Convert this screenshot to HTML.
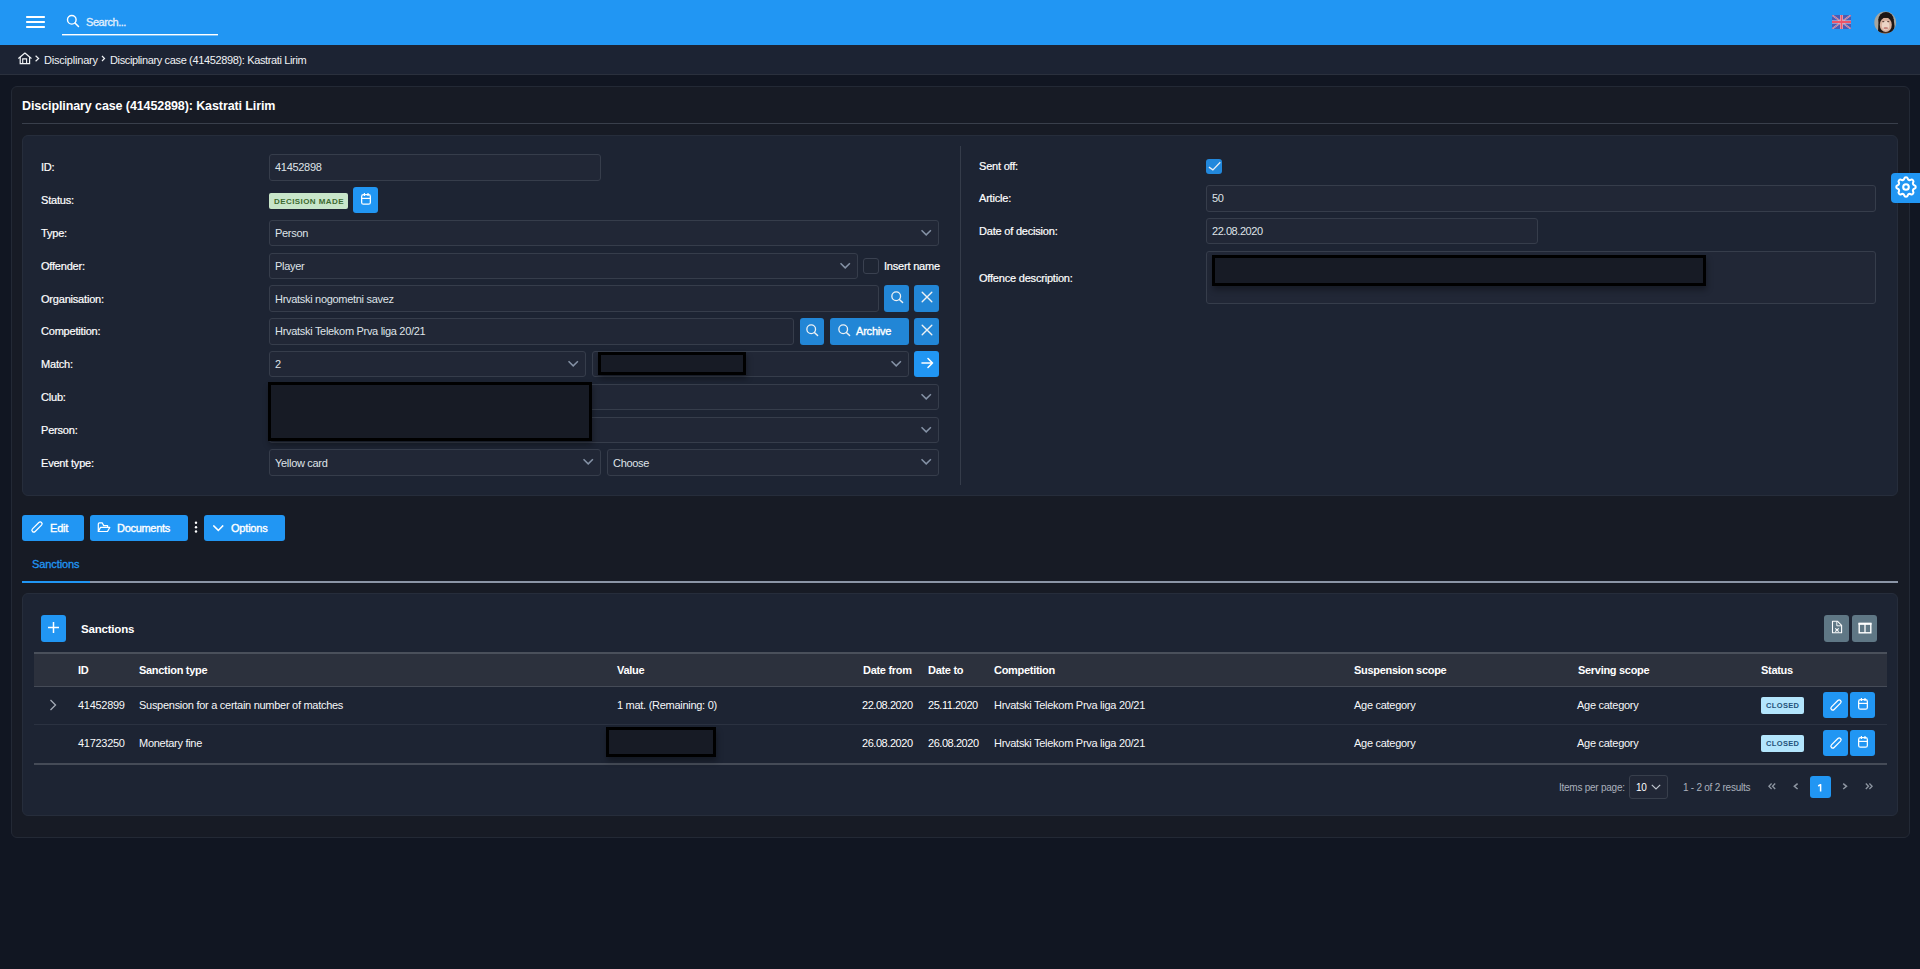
<!DOCTYPE html>
<html><head><meta charset="utf-8">
<style>
*{box-sizing:border-box;margin:0;padding:0}
html,body{width:1920px;height:969px;overflow:hidden}
body{background:#111622;font-family:"Liberation Sans",sans-serif;color:#e9ecef;font-size:11px;position:relative}
.a{position:absolute}
.t{position:absolute;white-space:nowrap;line-height:14px;letter-spacing:-0.2px}
.topbar{left:0;top:0;width:1920px;height:45px;background:#2196f3}
.crumb{left:0;top:45px;width:1920px;height:30px;background:#1c2333;border-bottom:1px solid #2a303d}
.outer{left:11px;top:86px;width:1899px;height:752px;background:#171b25;border:1px solid #232935;border-radius:6px}
.card{background:#1d2433;border:1px solid #262d3b;border-radius:6px}
.inp{position:absolute;background:#212736;border:1px solid #363d4b;border-radius:3px}
.btn{position:absolute;background:#2196f3;border-radius:3px}
.btn2{position:absolute;background:#2286d6;border-radius:3px}
.lbl{position:absolute;white-space:nowrap;line-height:14px;color:#fff;letter-spacing:-0.2px;-webkit-text-stroke:0.2px #fff}
.val{position:absolute;white-space:nowrap;line-height:14px;color:#dfe3e8;letter-spacing:-0.2px}
.chev{position:absolute;width:11px;height:8px}
.red{position:absolute;border:3px solid #000;background:#171b25;box-shadow:1px 4px 6px rgba(0,0,0,.32)}
</style></head><body>

<!-- top bar -->
<div class="a topbar"></div>
<svg class="a" style="left:26px;top:15px" width="20" height="14" viewBox="0 0 20 14"><rect x="0" y="1" width="19" height="2" rx="0.8" fill="#fff"/><rect x="0" y="6" width="19" height="2" rx="0.8" fill="#fff"/><rect x="0" y="11" width="19" height="2" rx="0.8" fill="#fff"/></svg>
<svg class="a" style="left:66px;top:14px" width="14" height="14" viewBox="0 0 14 14"><circle cx="5.8" cy="5.8" r="4.3" fill="none" stroke="#fff" stroke-width="1.4"/><line x1="9" y1="9" x2="12.5" y2="12.5" stroke="#fff" stroke-width="1.5" stroke-linecap="round"/></svg>
<div class="t" style="left:86px;top:15px;color:#e3f0fd;font-size:11px;letter-spacing:-0.45px;-webkit-text-stroke:0.3px #e3f0fd">Search...</div>
<div class="a" style="left:62px;top:34px;width:156px;height:1px;background:#fff"></div><div class="a" style="left:62px;top:35px;width:156px;height:1px;background:rgba(255,255,255,.4)"></div>


<div class="a" style="left:1832px;top:15px;width:19px;height:14px;overflow:hidden">
<svg width="19" height="14" viewBox="0 0 60 42" preserveAspectRatio="none"><rect width="60" height="42" fill="#4a5bb3"/><path d="M0,0 L60,42 M60,0 L0,42" stroke="#b9bde0" stroke-width="5"/><path d="M0,0 L60,42 M60,0 L0,42" stroke="#e0556a" stroke-width="2.5"/><path d="M30,0 V42 M0,21 H60" stroke="#d8d6e6" stroke-width="9"/><path d="M30,0 V42 M0,21 H60" stroke="#ee5366" stroke-width="6"/></svg></div>
<svg class="a" style="left:1874px;top:11px" width="23" height="23" viewBox="0 0 23 23"><defs><clipPath id="cc"><circle cx="11.2" cy="11.5" r="10.9"/></clipPath><filter id="bl"><feGaussianBlur stdDeviation="0.5"/></filter></defs><g clip-path="url(#cc)"><rect width="23" height="23" fill="#a5a6a0"/><g filter="url(#bl)"><ellipse cx="12" cy="8.5" rx="7.6" ry="7.6" fill="#1d1714"/><path d="M4.6,8 L4,21 Q6,23 8,23 L17,23 Q20.5,20 20.5,15 L19.6,8Z" fill="#1f1915"/><ellipse cx="11.8" cy="13.8" rx="6" ry="7.2" fill="#d8b09d"/><ellipse cx="11.6" cy="14.5" rx="3.8" ry="4.8" fill="#ecd3c5"/><path d="M5,10 Q7,3.5 12,5 Q17,3.5 19,10 Q16.5,6.2 12,6.9 Q7.5,6.2 5,10Z" fill="#1d1714"/><ellipse cx="9.3" cy="10.6" rx="1.2" ry="0.6" fill="#5a4038"/><ellipse cx="14.2" cy="10.6" rx="1.2" ry="0.6" fill="#5a4038"/><ellipse cx="11.8" cy="17.2" rx="2.3" ry="1.1" fill="#c8877e"/><rect x="6" y="21.5" width="12" height="3" fill="#7a4526"/></g></g></svg>

<!-- breadcrumb -->
<div class="a crumb"></div>
<svg class="a" style="left:18px;top:52px" width="14" height="13" viewBox="0 0 14 13"><path d="M0.7,6.2 L6.9,1.1 L13.1,6.2" fill="none" stroke="#f0f2f5" stroke-width="1.25" stroke-linejoin="round" stroke-linecap="round"/><path d="M2.2,5 V11.6 H11.6 V5" fill="none" stroke="#f0f2f5" stroke-width="1.2"/><path d="M4.7,11.6 V6.9 H8.6 V11.6" fill="none" stroke="#f0f2f5" stroke-width="1.1"/></svg>
<svg class="a" style="left:35px;top:55px" width="5" height="7" viewBox="0 0 5 7"><path d="M0.6,0.8 L3.6,3.5 L0.6,6.2" fill="none" stroke="#f0f2f5" stroke-width="1.2"/></svg>
<div class="t" style="left:44px;top:53px;color:#f0f2f5">Disciplinary</div>
<svg class="a" style="left:101px;top:55px" width="5" height="7" viewBox="0 0 5 7"><path d="M1,1 L3.5,3.5 L1,6" fill="none" stroke="#f0f2f5" stroke-width="1.2"/></svg>
<div class="t" style="left:110px;top:53px;color:#f0f2f5;letter-spacing:-0.36px">Disciplinary case (41452898): Kastrati Lirim</div>

<!-- outer card -->
<div class="a outer"></div>
<div class="t" style="left:22px;top:99px;font-weight:bold;font-size:12.5px;color:#fff;letter-spacing:-0.1px">Disciplinary case (41452898): Kastrati Lirim</div>
<div class="a" style="left:22px;top:123px;width:1876px;height:1px;background:#393f4b"></div>

<!-- form card -->
<div class="a card" style="left:22px;top:135px;width:1876px;height:361px"></div>
<div class="a" style="left:960px;top:146px;width:1px;height:339px;background:#353c4a"></div>


<!-- left form -->
<div class="lbl" style="left:41px;top:160px">ID:</div>
<div class="lbl" style="left:41px;top:193px">Status:</div>
<div class="lbl" style="left:41px;top:226px">Type:</div>
<div class="lbl" style="left:41px;top:259px">Offender:</div>
<div class="lbl" style="left:41px;top:292px">Organisation:</div>
<div class="lbl" style="left:41px;top:324px">Competition:</div>
<div class="lbl" style="left:41px;top:357px">Match:</div>
<div class="lbl" style="left:41px;top:390px">Club:</div>
<div class="lbl" style="left:41px;top:423px">Person:</div>
<div class="lbl" style="left:41px;top:456px">Event type:</div>
<div class="inp" style="left:269px;top:154px;width:332px;height:27px"></div><div class="val" style="left:275px;top:160px;letter-spacing:-0.3px">41452898</div>
<div class="a" style="left:269px;top:193px;width:79px;height:16px;background:#c8e6c9;border-radius:2px"></div><div class="t" style="left:274px;top:195px;font-size:8px;font-weight:bold;color:#3d6b30;letter-spacing:0.42px;line-height:15px;line-height:14px">DECISION MADE</div>
<div class="btn" style="left:353px;top:187px;width:25px;height:26px"></div><svg class="a" style="left:360px;top:192px" width="13" height="14" viewBox="0 0 13 14"><rect x="1.65" y="2.6" width="8.7" height="9.6" rx="1.8" fill="none" stroke="#fff" stroke-width="1.25"/><line x1="1.65" y1="6.4" x2="10.35" y2="6.4" stroke="#fff" stroke-width="1.2"/><line x1="4.4" y1="1" x2="4.4" y2="4" stroke="#fff" stroke-width="1.2"/><line x1="8" y1="1" x2="8" y2="4" stroke="#fff" stroke-width="1.2"/></svg>
<div class="inp" style="left:269px;top:220px;width:670px;height:26px"></div><div class="val" style="left:275px;top:226px;letter-spacing:-0.3px">Person</div><svg class="chev" style="left:921px;top:229px" viewBox="0 0 11 8"><path d="M0.5,1.2 L5.2,5.9 L9.9,1.2" fill="none" stroke="#8592a6" stroke-width="1.5"/></svg>
<div class="inp" style="left:269px;top:253px;width:589px;height:26px"></div><div class="val" style="left:275px;top:259px;letter-spacing:-0.3px">Player</div><svg class="chev" style="left:840px;top:262px" viewBox="0 0 11 8"><path d="M0.5,1.2 L5.2,5.9 L9.9,1.2" fill="none" stroke="#8592a6" stroke-width="1.5"/></svg>
<div class="a" style="left:863px;top:258px;width:16px;height:16px;border:1px solid #3a4150;border-radius:3px;background:#1e2533"></div><div class="lbl" style="left:884px;top:259px">Insert name</div>
<div class="inp" style="left:269px;top:285px;width:610px;height:27px"></div><div class="val" style="left:275px;top:292px;letter-spacing:-0.3px">Hrvatski nogometni savez</div>
<div class="btn2" style="left:884px;top:285px;width:25px;height:27px"></div><svg class="a" style="left:891px;top:291px" width="13" height="13" viewBox="0 0 13 13"><circle cx="5.2" cy="5.2" r="4.35" fill="none" stroke="#eef1f4" stroke-width="1.3"/><line x1="8.4" y1="8.4" x2="11.6" y2="11.6" stroke="#eef1f4" stroke-width="1.45" stroke-linecap="round"/></svg><div class="btn2" style="left:914px;top:285px;width:25px;height:27px"></div><svg class="a" style="left:921px;top:291px" width="12" height="12" viewBox="0 0 12 12"><path d="M1.2,1.2 L10.8,10.8 M10.8,1.2 L1.2,10.8" stroke="#eef1f4" stroke-width="1.4" stroke-linecap="round"/></svg>
<div class="inp" style="left:269px;top:318px;width:525px;height:27px"></div><div class="val" style="left:275px;top:324px;letter-spacing:-0.3px">Hrvatski Telekom Prva liga 20/21</div>
<div class="btn2" style="left:800px;top:318px;width:24px;height:27px"></div><svg class="a" style="left:806px;top:324px" width="13" height="13" viewBox="0 0 13 13"><circle cx="5.2" cy="5.2" r="4.35" fill="none" stroke="#eef1f4" stroke-width="1.3"/><line x1="8.4" y1="8.4" x2="11.6" y2="11.6" stroke="#eef1f4" stroke-width="1.45" stroke-linecap="round"/></svg><div class="btn2" style="left:830px;top:318px;width:79px;height:27px"></div><svg class="a" style="left:838px;top:324px" width="13" height="13" viewBox="0 0 13 13"><circle cx="5.2" cy="5.2" r="4.35" fill="none" stroke="#eef1f4" stroke-width="1.3"/><line x1="8.4" y1="8.4" x2="11.6" y2="11.6" stroke="#eef1f4" stroke-width="1.45" stroke-linecap="round"/></svg><div class="t" style="left:856px;top:324px;color:#fff;font-size:11px;letter-spacing:-0.2px;-webkit-text-stroke:0.35px #fff">Archive</div><div class="btn2" style="left:914px;top:318px;width:25px;height:27px"></div><svg class="a" style="left:921px;top:324px" width="12" height="12" viewBox="0 0 12 12"><path d="M1.2,1.2 L10.8,10.8 M10.8,1.2 L1.2,10.8" stroke="#eef1f4" stroke-width="1.4" stroke-linecap="round"/></svg>
<div class="inp" style="left:269px;top:351px;width:317px;height:26px"></div><div class="val" style="left:275px;top:357px;letter-spacing:-0.3px">2</div><svg class="chev" style="left:568px;top:360px" viewBox="0 0 11 8"><path d="M0.5,1.2 L5.2,5.9 L9.9,1.2" fill="none" stroke="#8592a6" stroke-width="1.5"/></svg><div class="inp" style="left:592px;top:351px;width:317px;height:26px"></div><svg class="chev" style="left:891px;top:360px" viewBox="0 0 11 8"><path d="M0.5,1.2 L5.2,5.9 L9.9,1.2" fill="none" stroke="#8592a6" stroke-width="1.5"/></svg>
<div class="btn" style="left:914px;top:351px;width:25px;height:26px"></div><svg class="a" style="left:921px;top:357px" width="13" height="12" viewBox="0 0 13 12"><path d="M1,6 H11.5 M7,1.5 L11.5,6 L7,10.5" fill="none" stroke="#fff" stroke-width="1.6" stroke-linecap="round" stroke-linejoin="round"/></svg>
<div class="red" style="left:598px;top:352px;width:148px;height:23px"></div>
<div class="inp" style="left:269px;top:384px;width:670px;height:26px"></div><svg class="chev" style="left:921px;top:393px" viewBox="0 0 11 8"><path d="M0.5,1.2 L5.2,5.9 L9.9,1.2" fill="none" stroke="#8592a6" stroke-width="1.5"/></svg>
<div class="inp" style="left:269px;top:417px;width:670px;height:26px"></div><svg class="chev" style="left:921px;top:426px" viewBox="0 0 11 8"><path d="M0.5,1.2 L5.2,5.9 L9.9,1.2" fill="none" stroke="#8592a6" stroke-width="1.5"/></svg>
<div class="red" style="left:268px;top:382px;width:324px;height:59px"></div>
<div class="inp" style="left:269px;top:449px;width:332px;height:27px"></div><div class="val" style="left:275px;top:456px;letter-spacing:-0.3px">Yellow card</div><svg class="chev" style="left:583px;top:458px" viewBox="0 0 11 8"><path d="M0.5,1.2 L5.2,5.9 L9.9,1.2" fill="none" stroke="#8592a6" stroke-width="1.5"/></svg><div class="inp" style="left:607px;top:449px;width:332px;height:27px"></div><div class="val" style="left:613px;top:456px;letter-spacing:-0.3px">Choose</div><svg class="chev" style="left:921px;top:458px" viewBox="0 0 11 8"><path d="M0.5,1.2 L5.2,5.9 L9.9,1.2" fill="none" stroke="#8592a6" stroke-width="1.5"/></svg>


<!-- right form -->
<div class="lbl" style="left:979px;top:159px">Sent off:</div>
<div class="lbl" style="left:979px;top:191px">Article:</div>
<div class="lbl" style="left:979px;top:224px">Date of decision:</div>
<div class="lbl" style="left:979px;top:271px">Offence description:</div>
<div class="a" style="left:1206px;top:159px;width:16px;height:15px;background:#2288dc;border-radius:3px"></div><svg class="a" style="left:1206px;top:159px" width="16" height="16" viewBox="0 0 16 16"><path d="M2.9,8.1 L6.9,10.9 L14.3,3.3" fill="none" stroke="#e8eef5" stroke-width="1.3"/></svg>
<div class="inp" style="left:1206px;top:185px;width:670px;height:27px"></div><div class="val" style="left:1212px;top:191px;letter-spacing:-0.3px">50</div>
<div class="inp" style="left:1206px;top:218px;width:332px;height:26px"></div><div class="val" style="left:1212px;top:224px;letter-spacing:-0.45px">22.08.2020</div>
<div class="inp" style="left:1206px;top:251px;width:670px;height:53px"></div>
<div class="red" style="left:1212px;top:255px;width:494px;height:31px"></div>

<!-- action buttons -->
<div class="btn" style="left:22px;top:515px;width:62px;height:26px"></div><svg class="a" style="left:30px;top:520px" width="14" height="14" viewBox="0 0 14 14"><g transform="rotate(-45 7 7)"><rect x="0.6" y="5.1" width="12.8" height="3.8" rx="1.9" fill="none" stroke="#fff" stroke-width="1.25"/></g></svg><div class="t" style="left:50px;top:521px;color:#fff;font-size:11px;-webkit-text-stroke:0.35px #fff">Edit</div>
<div class="btn" style="left:90px;top:515px;width:98px;height:26px"></div><svg class="a" style="left:97px;top:521px" width="14" height="12" viewBox="0 0 14 12"><path d="M1.3,10.5 V3 Q1.3,1.8 2.5,1.8 H5.2 L6.7,4.6 H10.6 V6.4" fill="none" stroke="#fff" stroke-width="1.2" stroke-linejoin="round"/><path d="M1.3,10.5 L3.5,6.4 H12.8 L10.5,10.5 Z" fill="none" stroke="#fff" stroke-width="1.2" stroke-linejoin="round"/></svg><div class="t" style="left:117px;top:521px;color:#fff;font-size:11px;letter-spacing:-0.3px;-webkit-text-stroke:0.35px #fff">Documents</div>
<svg class="a" style="left:194px;top:520px" width="4" height="15" viewBox="0 0 4 15"><circle cx="2" cy="2.7" r="1.2" fill="#fff"/><circle cx="2" cy="7.2" r="1.2" fill="#fff"/><circle cx="2" cy="11.5" r="1.2" fill="#fff"/></svg>
<div class="btn" style="left:204px;top:515px;width:81px;height:26px"></div><svg class="a" style="left:213px;top:525px" width="11" height="7" viewBox="0 0 11 7"><path d="M0.3,0.4 L5.3,5.4 L10.2,0.4" fill="none" stroke="#fff" stroke-width="1.5"/></svg><div class="t" style="left:231px;top:521px;color:#fff;font-size:11px;letter-spacing:-0.2px;-webkit-text-stroke:0.35px #fff">Options</div>

<!-- tabs -->
<div class="t" style="left:32px;top:557px;color:#2196f3;font-size:11px;letter-spacing:-0.1px;-webkit-text-stroke:0.3px #2196f3">Sanctions</div>
<div class="a" style="left:22px;top:581px;width:1876px;height:2px;background:#8b95a6"></div><div class="a" style="left:22px;top:581px;width:68px;height:2px;background:#2196f3"></div>

<!-- sanctions card -->
<div class="a card" style="left:22px;top:593px;width:1876px;height:223px"></div>
<div class="btn" style="left:41px;top:615px;width:25px;height:27px"></div><svg class="a" style="left:47px;top:621px" width="13" height="13" viewBox="0 0 13 13"><path d="M6.5,1 V12 M1,6.5 H12" stroke="#fff" stroke-width="1.5"/></svg>
<div class="t" style="left:81px;top:622px;color:#fff;font-weight:bold;font-size:11.5px;letter-spacing:-0.2px">Sanctions</div>
<div class="a" style="left:1824px;top:615px;width:25px;height:27px;background:#5f7785;border-radius:3px"></div><svg class="a" style="left:1831px;top:620px" width="12" height="14" viewBox="0 0 12 14"><path d="M1.5,1.3 H6.6 L10.6,5.3 V12.7 H1.5 Z" fill="none" stroke="#fff" stroke-width="1.1" stroke-linejoin="round"/><path d="M5.8,1.5 V5.8 H10.4" fill="none" stroke="#fff" stroke-width="0.9"/><path d="M4.3,8.3 L7.7,11.6 M7.7,8.3 L4.3,11.6" stroke="#fff" stroke-width="1.1"/></svg>
<div class="a" style="left:1852px;top:615px;width:25px;height:27px;background:#5f7785;border-radius:3px"></div><svg class="a" style="left:1858px;top:622px" width="14" height="12" viewBox="0 0 14 12"><rect x="1.2" y="1.5" width="11.6" height="9.3" fill="none" stroke="#fff" stroke-width="1.4"/><rect x="0.5" y="0.8" width="13" height="2" fill="#fff"/><line x1="7" y1="1" x2="7" y2="11" stroke="#fff" stroke-width="1.3"/></svg>
<div class="a" style="left:34px;top:652px;width:1853px;height:2px;background:#4a505b"></div><div class="a" style="left:34px;top:654px;width:1853px;height:32px;background:#2c313d"></div><div class="a" style="left:34px;top:686px;width:1853px;height:1px;background:#454b57"></div>
<div class="t" style="left:78px;top:663px;color:#fff;font-weight:bold;font-size:11px;letter-spacing:-0.3px">ID</div>
<div class="t" style="left:139px;top:663px;color:#fff;font-weight:bold;font-size:11px;letter-spacing:-0.3px">Sanction type</div>
<div class="t" style="left:617px;top:663px;color:#fff;font-weight:bold;font-size:11px;letter-spacing:-0.3px">Value</div>
<div class="t" style="left:863px;top:663px;color:#fff;font-weight:bold;font-size:11px;letter-spacing:-0.3px">Date from</div>
<div class="t" style="left:928px;top:663px;color:#fff;font-weight:bold;font-size:11px;letter-spacing:-0.3px">Date to</div>
<div class="t" style="left:994px;top:663px;color:#fff;font-weight:bold;font-size:11px;letter-spacing:-0.3px">Competition</div>
<div class="t" style="left:1354px;top:663px;color:#fff;font-weight:bold;font-size:11px;letter-spacing:-0.3px">Suspension scope</div>
<div class="t" style="left:1578px;top:663px;color:#fff;font-weight:bold;font-size:11px;letter-spacing:-0.3px">Serving scope</div>
<div class="t" style="left:1761px;top:663px;color:#fff;font-weight:bold;font-size:11px;letter-spacing:-0.3px">Status</div>
<div class="a" style="left:34px;top:724px;width:1853px;height:1px;background:#2b3241"></div><div class="a" style="left:34px;top:763px;width:1853px;height:2px;background:#454b57"></div>
<div class="val" style="left:78px;top:698px;color:#f6f7f9;letter-spacing:-0.28px">41452899</div>
<div class="val" style="left:139px;top:698px;color:#f6f7f9;letter-spacing:-0.28px">Suspension for a certain number of matches</div>
<div class="val" style="left:617px;top:698px;color:#f6f7f9;letter-spacing:-0.28px">1 mat. (Remaining: 0)</div>
<div class="val" style="left:862px;top:698px;color:#fff;letter-spacing:-0.45px">22.08.2020</div>
<div class="val" style="left:928px;top:698px;color:#fff;letter-spacing:-0.45px">25.11.2020</div>
<div class="val" style="left:994px;top:698px;color:#f6f7f9;letter-spacing:-0.28px">Hrvatski Telekom Prva liga 20/21</div>
<div class="val" style="left:1354px;top:698px;color:#f6f7f9;letter-spacing:-0.28px">Age category</div>
<div class="val" style="left:1577px;top:698px;color:#f6f7f9;letter-spacing:-0.28px">Age category</div>
<div class="a" style="left:1761px;top:697px;width:43px;height:17px;background:#b3e5fc;border-radius:2px"></div><div class="t" style="left:1766px;top:699px;font-size:7.5px;font-weight:bold;color:#24527a;letter-spacing:0.35px">CLOSED</div>
<div class="btn" style="left:1823px;top:692px;width:25px;height:26px"></div><svg class="a" style="left:1829px;top:698px" width="14" height="14" viewBox="0 0 14 14"><g transform="rotate(-45 7 7)"><rect x="0.6" y="5.1" width="12.8" height="3.8" rx="1.9" fill="none" stroke="#fff" stroke-width="1.25"/></g></svg>
<div class="btn" style="left:1850px;top:692px;width:25px;height:26px"></div><svg class="a" style="left:1857px;top:697px" width="13" height="14" viewBox="0 0 13 14"><rect x="1.65" y="2.6" width="8.7" height="9.6" rx="1.8" fill="none" stroke="#fff" stroke-width="1.25"/><line x1="1.65" y1="6.4" x2="10.35" y2="6.4" stroke="#fff" stroke-width="1.2"/><line x1="4.4" y1="1" x2="4.4" y2="4" stroke="#fff" stroke-width="1.2"/><line x1="8" y1="1" x2="8" y2="4" stroke="#fff" stroke-width="1.2"/></svg>
<div class="val" style="left:78px;top:736px;color:#f6f7f9;letter-spacing:-0.28px">41723250</div>
<div class="val" style="left:139px;top:736px;color:#f6f7f9;letter-spacing:-0.28px">Monetary fine</div>
<div class="val" style="left:862px;top:736px;color:#fff;letter-spacing:-0.45px">26.08.2020</div>
<div class="val" style="left:928px;top:736px;color:#fff;letter-spacing:-0.45px">26.08.2020</div>
<div class="val" style="left:994px;top:736px;color:#f6f7f9;letter-spacing:-0.28px">Hrvatski Telekom Prva liga 20/21</div>
<div class="val" style="left:1354px;top:736px;color:#f6f7f9;letter-spacing:-0.28px">Age category</div>
<div class="val" style="left:1577px;top:736px;color:#f6f7f9;letter-spacing:-0.28px">Age category</div>
<div class="a" style="left:1761px;top:735px;width:43px;height:17px;background:#b3e5fc;border-radius:2px"></div><div class="t" style="left:1766px;top:737px;font-size:7.5px;font-weight:bold;color:#24527a;letter-spacing:0.35px">CLOSED</div>
<div class="btn" style="left:1823px;top:730px;width:25px;height:26px"></div><svg class="a" style="left:1829px;top:736px" width="14" height="14" viewBox="0 0 14 14"><g transform="rotate(-45 7 7)"><rect x="0.6" y="5.1" width="12.8" height="3.8" rx="1.9" fill="none" stroke="#fff" stroke-width="1.25"/></g></svg>
<div class="btn" style="left:1850px;top:730px;width:25px;height:26px"></div><svg class="a" style="left:1857px;top:735px" width="13" height="14" viewBox="0 0 13 14"><rect x="1.65" y="2.6" width="8.7" height="9.6" rx="1.8" fill="none" stroke="#fff" stroke-width="1.25"/><line x1="1.65" y1="6.4" x2="10.35" y2="6.4" stroke="#fff" stroke-width="1.2"/><line x1="4.4" y1="1" x2="4.4" y2="4" stroke="#fff" stroke-width="1.2"/><line x1="8" y1="1" x2="8" y2="4" stroke="#fff" stroke-width="1.2"/></svg>
<svg class="a" style="left:49px;top:699px" width="8" height="12" viewBox="0 0 8 12"><path d="M1.5,1 L6.5,6 L1.5,11" fill="none" stroke="#a4abb6" stroke-width="1.3"/></svg>
<div class="red" style="left:606px;top:727px;width:110px;height:30px"></div>
<div class="t" style="left:1559px;top:781px;color:#a9b0bb;font-size:10px;letter-spacing:-0.25px">Items per page:</div>
<div class="a" style="left:1629px;top:775px;width:39px;height:24px;border:1px solid #383f4c;border-radius:3px;background:#212736"></div><div class="t" style="left:1636px;top:781px;color:#fff;font-size:10px;letter-spacing:-0.3px">10</div><svg class="a" style="left:1651px;top:784px" width="10" height="6" viewBox="0 0 10 6"><path d="M0.8,0.8 L5,5 L9.2,0.8" fill="none" stroke="#c0c6cf" stroke-width="1.2"/></svg>
<div class="t" style="left:1683px;top:781px;color:#a9b0bb;font-size:10px;letter-spacing:-0.25px">1 - 2 of 2 results</div>
<svg class="a" style="left:1768px;top:783px" width="8" height="7" viewBox="0 0 8 7"><path d="M3.6,0.6 L0.9,3.3 L3.6,6 M7.2,0.6 L4.5,3.3 L7.2,6" fill="none" stroke="#8d95a1" stroke-width="1.35"/></svg><svg class="a" style="left:1793px;top:783px" width="6" height="7" viewBox="0 0 6 7"><path d="M4.6,0.6 L1.3,3.3 L4.6,6" fill="none" stroke="#8d95a1" stroke-width="1.5"/></svg>
<div class="btn" style="left:1810px;top:776px;width:21px;height:22px"></div><svg class="a" style="left:1817px;top:784px" width="7" height="8" viewBox="0 0 7 8"><path d="M1.2,2 L3.6,0.6 V7.6" fill="none" stroke="#fff" stroke-width="1.5" stroke-linejoin="round"/></svg>
<svg class="a" style="left:1842px;top:783px" width="6" height="7" viewBox="0 0 6 7"><path d="M1.2,0.6 L4.5,3.3 L1.2,6" fill="none" stroke="#8d95a1" stroke-width="1.5"/></svg><svg class="a" style="left:1865px;top:783px" width="8" height="7" viewBox="0 0 8 7"><path d="M0.8,0.6 L3.5,3.3 L0.8,6 M4.4,0.6 L7.1,3.3 L4.4,6" fill="none" stroke="#8d95a1" stroke-width="1.35"/></svg>
<div class="a" style="left:1891px;top:173px;width:29px;height:30px;background:#2196f3;border-radius:4px 0 0 4px"></div><svg class="a" style="left:1893px;top:174px" width="26" height="26" viewBox="0 0 24 24"><path d="M10.325 4.317c.426 -1.756 2.924 -1.756 3.35 0a1.724 1.724 0 0 0 2.573 1.066c1.543 -.94 3.31 .826 2.37 2.37a1.724 1.724 0 0 0 1.065 2.572c1.756 .426 1.756 2.924 0 3.35a1.724 1.724 0 0 0 -1.066 2.573c.94 1.543 -.826 3.31 -2.37 2.37a1.724 1.724 0 0 0 -2.572 1.065c-.426 1.756 -2.924 1.756 -3.35 0a1.724 1.724 0 0 0 -2.573 -1.066c-1.543 .94 -3.31 -.826 -2.37 -2.37a1.724 1.724 0 0 0 -1.065 -2.572c-1.756 -.426 -1.756 -2.924 0 -3.35a1.724 1.724 0 0 0 1.066 -2.573c-.94 -1.543 .826 -3.31 2.37 -2.37c1 .608 2.296 .07 2.572 -1.065z" fill="none" stroke="#fff" stroke-width="1.9" stroke-linecap="round" stroke-linejoin="round"/><circle cx="12" cy="12" r="2.6" fill="none" stroke="#fff" stroke-width="1.9"/></svg>

</body></html>
